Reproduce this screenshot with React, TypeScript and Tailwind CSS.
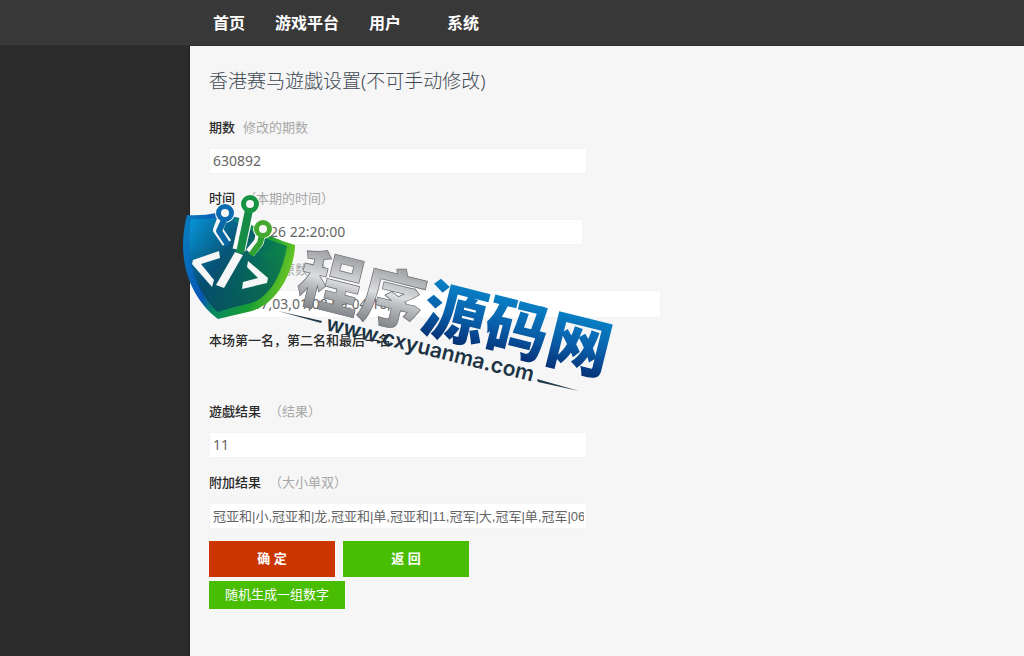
import React, { useId } from "react";

const bodyFont = "font-['Noto_Sans','Noto_Sans_CJK_SC',sans-serif]";
const listFont = "font-['Liberation_Sans','Noto_Sans_CJK_SC',sans-serif]";

type FieldProps = {
  label: string;
  hint: string;
  value: string;
  inputClass: string;
};

function Field({ label, hint, value, inputClass }: FieldProps) {
  const id = useId();
  return (
    <div className="min-h-[58px]">
      <label htmlFor={id} className="mb-[10px] flex items-center gap-2 text-[13px] leading-[22px]">
        <span className="font-medium text-[#2a2a2a]">{label}</span>
        <span className="text-[#a8a8a8]">{hint}</span>
      </label>
      <input
        id={id}
        type="text"
        defaultValue={value}
        className={`block max-w-full border border-[#f3f3f3] bg-white pr-0.5 pb-0.5 pl-[3px] text-[#666] outline-none ${inputClass}`}
      />
    </div>
  );
}

function Logo() {
  return (
    <svg
      viewBox="180 190 480 240"
      width="480"
      height="240"
      className="pointer-events-none absolute top-[190px] left-[180px] overflow-visible"
      aria-hidden="true"
    >
      <defs>
        <linearGradient id="edge" x1="183" y1="240" x2="295" y2="275" gradientUnits="userSpaceOnUse">
          <stop offset="0" stopColor="#0878bd" />
          <stop offset="0.3" stopColor="#0756b5" />
          <stop offset="0.42" stopColor="#078762" />
          <stop offset="0.7" stopColor="#179d35" />
          <stop offset="1" stopColor="#79cd20" />
        </linearGradient>
        <linearGradient id="face" x1="190" y1="225" x2="280" y2="285" gradientUnits="userSpaceOnUse">
          <stop offset="0" stopColor="#078fd0" />
          <stop offset="0.42" stopColor="#075678" />
          <stop offset="0.7" stopColor="#067457" />
          <stop offset="1" stopColor="#15953d" />
        </linearGradient>
        <linearGradient id="shade" x1="0" y1="245" x2="0" y2="315" gradientUnits="userSpaceOnUse">
          <stop offset="0" stopColor="#063d63" stopOpacity="0" />
          <stop offset="1" stopColor="#064461" stopOpacity="0.7" />
        </linearGradient>
        <linearGradient id="silver" x1="0" y1="-52" x2="0" y2="5" gradientUnits="userSpaceOnUse">
          <stop offset="0" stopColor="#a2a4a7" />
          <stop offset="0.45" stopColor="#dcdde0" />
          <stop offset="0.6" stopColor="#bcbec1" />
          <stop offset="1" stopColor="#85888c" />
        </linearGradient>
        <linearGradient id="ocean" x1="0" y1="-52" x2="0" y2="5" gradientUnits="userSpaceOnUse">
          <stop offset="0" stopColor="#087fc4" />
          <stop offset="0.5" stopColor="#0960ab" />
          <stop offset="1" stopColor="#063277" />
        </linearGradient>
      </defs>

      <path
        d="M187 215Q203 216 216 213L240 218L268 235Q281 241 295 245C295 265 281 302 252 311Q235 315 218 319C195 302 174 265 187 215Z"
        fill="url(#edge)"
      />
      <path
        d="M191 219Q206 220 219 217L240 224L267 239Q278 243 287 246C282 278 267 300 247 304Q232 307 218 312C199 294 184 264 191 219Z"
        fill="url(#face)"
      />
      <path
        d="M190 240Q230 225 265 259L284 253C280 282 265 301 247 304Q232 307 218 312C200 296 187 269 190 240Z"
        fill="url(#shade)"
      />

      <g fill="none" strokeLinejoin="round">
        <g stroke="#f8f8f8">
          <path d="M224 214L218 230L227 243" strokeWidth="10" />
          <path d="M249 205L239 250" strokeWidth="13" />
          <path d="M262 228L259 242L250 253" strokeWidth="10" />
        </g>
        <g fill="#f8f8f8" stroke="none">
          <circle cx="225" cy="213" r="10" />
          <circle cx="250" cy="204" r="10" />
          <circle cx="263" cy="229" r="10" />
        </g>
        <path d="M224 220L219 231L228 245" stroke="#0868a5" strokeWidth="6" />
        <path d="M249 210L240 253" stroke="#168b45" strokeWidth="8" />
        <path d="M262 235L260 243L251 255" stroke="#2fa331" strokeWidth="6" />
        <circle cx="225" cy="213" r="6.5" stroke="#0b6bb0" strokeWidth="5" />
        <circle cx="250" cy="204" r="6.5" stroke="#189343" strokeWidth="5" />
        <circle cx="263" cy="229" r="6.5" stroke="#45a92f" strokeWidth="5" />
      </g>

      <g fill="#f5f6f6">
        <path d="M219 251L220 258L201 264L214 280L212 287L192 264L193 260Z" />
        <path d="M235 252L243 255L224 288L216 285Z" />
        <path d="M248 261L268 278L267 283L242 289L243 282L258 278L247 267Z" />
      </g>

      <path d="M278 311L322 321L321 323Z" fill="#20394a" />
      <path d="M537 379L579 391L538 382Z" fill="#20394a" />

      <g
        transform="translate(294 298) rotate(14)"
        fontFamily="'Noto Sans CJK SC', sans-serif"
        fontSize="64"
        fontWeight="900"
      >
        <text x="0" y="0" fill="url(#silver)" stroke="#6b6e72" strokeWidth="0.7">
          程序
        </text>
        <text x="128" y="0" fill="url(#ocean)">
          源码网
        </text>
      </g>
      <text
        transform="translate(325 330) rotate(14)"
        fontFamily="Inter, sans-serif"
        fontSize="21"
        fontWeight="600"
        fill="#1d3445"
      >
        www.cxyuanma.com
      </text>
    </svg>
  );
}

export default function App() {
  return (
    <div className={`relative flex min-h-screen flex-col bg-[#f6f6f6] ${bodyFont}`}>
      <header className="flex h-[46px] items-center border-b border-[#303030] bg-[#383838] pl-[213px]">
        <nav className="flex gap-[30px] text-base font-bold text-white">
          <a href="#home">首页</a>
          <a href="#games">游戏平台</a>
          <a href="#users">用户</a>
          <a href="#system" className="ml-4">系统</a>
        </nav>
      </header>

      <div className="flex flex-1">
        <aside className="w-[190px] shrink-0 border-r border-[#222] bg-[#2b2b2b]" />
        <main className="min-w-0 flex-1 px-[19px] pt-[21px] pb-8">
          <h1 className="mb-[21px] text-[19px] leading-7 font-light text-[#3f4a54]">
            香港赛马遊戯设置(不可手动修改)
          </h1>
          <form className="flex flex-col" onSubmit={(event) => event.preventDefault()}>
            <div className="flex flex-col gap-[13px]">
              <Field label="期数" hint="修改的期数" value="630892" inputClass="h-[26px] w-[378px] text-sm" />
              <Field
                label="时间"
                hint="（本期的时间）"
                value="2021-03-26 22:20:00"
                inputClass="h-[26px] w-[374px] text-sm"
              />
              <div className="h-[58px]">
                <Field
                  label="开奖号码"
                  hint="（原数据）"
                  value="06,02,07,03,01,08,09,04,10,05"
                  inputClass="h-7 w-[452px] text-sm"
                />
              </div>
              <p className="min-h-[58px] text-[13px] leading-[22px] font-medium text-[#2a2a2a]">
                本场第一名，第二名和最后一名
              </p>
              <Field label="遊戯结果" hint="（结果）" value="11" inputClass="h-[26px] w-[378px] text-sm" />
              <Field
                label="附加结果"
                hint="（大小单双）"
                value="冠亚和|小,冠亚和|龙,冠亚和|单,冠亚和|11,冠军|大,冠军|单,冠军|06"
                inputClass={`h-[26px] w-[378px] text-[13px] ${listFont}`}
              />
            </div>
            <div className="mt-3 flex gap-2">
              <button type="submit" className="h-9 w-[126px] bg-[#cb3500] text-[13px] font-bold text-white">
                确 定
              </button>
              <button type="button" className="h-9 w-[126px] bg-[#48bd02] text-[13px] font-bold text-white">
                返 回
              </button>
            </div>
            <button
              type="button"
              className="mt-1 h-7 self-start bg-[#48bd02] px-4 text-[13px] text-white"
            >
              随机生成一组数字
            </button>
          </form>
        </main>
      </div>
      <Logo />
    </div>
  );
}
